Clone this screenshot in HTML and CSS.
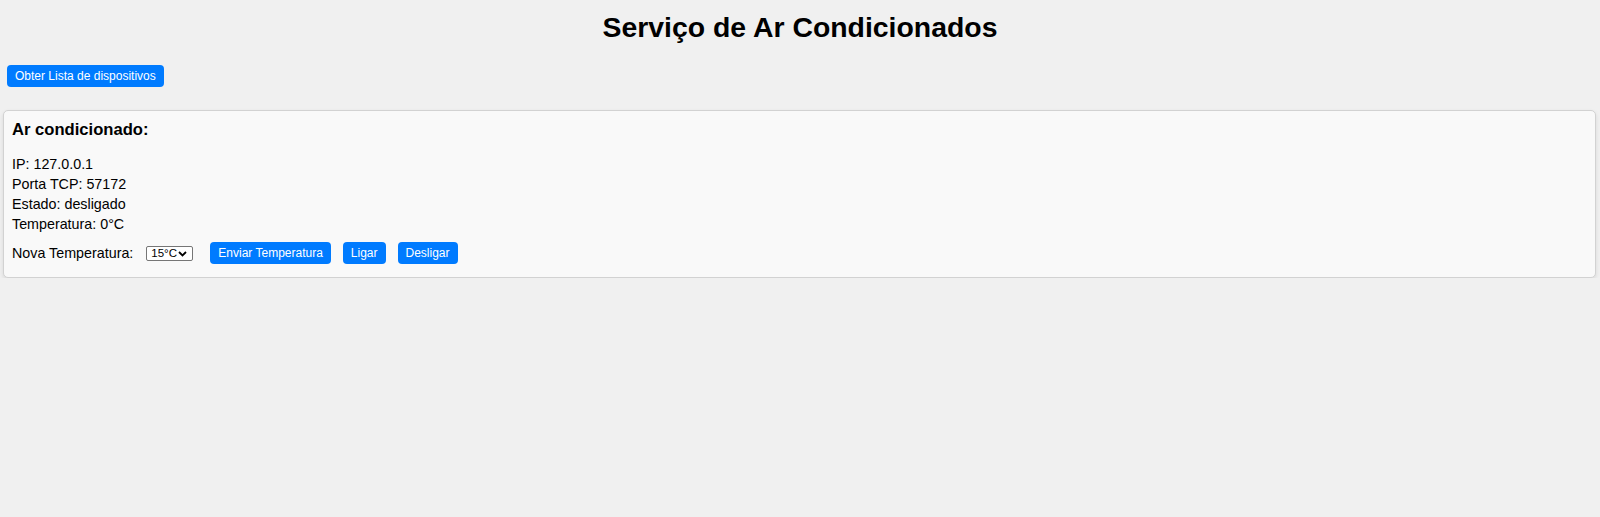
FILE: index.html
```html
<!DOCTYPE html>
<html lang="pt">
<head>
<meta charset="utf-8">
<title>Serviço de Ar Condicionados</title>
<link rel="stylesheet" href="styles.css">
</head>
<body>
<h1 class="title">Serviço de Ar Condicionados</h1>
<div class="toolbar">
  <button class="btn">Obter Lista de dispositivos</button>
</div>
<div class="card">
  <h3 class="card-title">Ar condicionado:</h3>
  <div class="info">IP: 127.0.0.1</div>
  <div class="info">Porta TCP: 57172</div>
  <div class="info">Estado: desligado</div>
  <div class="info">Temperatura: 0°C</div>
  <div class="controls">
    <label class="label">Nova Temperatura:</label>
    <span class="select-wrap">
      <select class="select">
        <option>15°C</option>
        <option>16°C</option>
        <option>17°C</option>
      </select>
      <svg class="chev" width="9" height="6" viewBox="0 0 9 6"><path d="M1 1 L4.5 4.5 L8 1" fill="none" stroke="#000" stroke-width="1.8"/></svg>
    </span>
    <button class="btn btn-gap">Enviar Temperatura</button>
    <button class="btn btn-gap">Ligar</button>
    <button class="btn">Desligar</button>
  </div>
</div>
</body>
</html>
```
FILE: styles.css
```css
html, body {
  margin: 0;
  padding: 0;
}
body {
  background: #f0f0f0;
  font-family: "Liberation Sans", Arial, sans-serif;
  font-size: 14.3px;
  color: #000;
}
.title {
  margin: 11px 0 22px;
  font-size: 28.4px;
  line-height: 32px;
  font-weight: bold;
  text-align: center;
}
.toolbar {
  padding-left: 7px;
  margin-bottom: 23px;
  display: flex;
}
.btn {
  font-family: "Liberation Sans", Arial, sans-serif;
  font-size: 12px;
  line-height: 14px;
  padding: 4px 8px;
  border: none;
  border-radius: 4px;
  background: #007bff;
  color: #fff;
  cursor: pointer;
}
.card {
  margin: 0 4px 0 3px;
  border: 1px solid #d2d2d2;
  border-radius: 5px;
  background: #f9f9f9;
  padding: 9px 9px 10px 8px;
  box-shadow: 0 2px 4px rgba(0, 0, 0, 0.1);
}
.card-title {
  margin: 0 0 15px;
  font-size: 16.6px;
  line-height: 19px;
  font-weight: bold;
}
.info {
  line-height: 20px;
}
.controls {
  display: flex;
  align-items: center;
  margin: 8px 0 3px;
  height: 22px;
}
.label {
  margin-right: 13px;
}
.select-wrap {
  position: relative;
  display: inline-flex;
  margin-right: 17px;
}
.select {
  appearance: none;
  -webkit-appearance: none;
  width: 47px;
  height: 15px;
  box-sizing: border-box;
  border: 1px solid #767676;
  border-radius: 2px;
  background: #fff;
  font-family: "Liberation Sans", Arial, sans-serif;
  font-size: 11.5px;
  line-height: 13px;
  padding: 0 0 0 4px;
  color: #000;
  margin: 0;
}
.chev {
  position: absolute;
  right: 6px;
  top: 5px;
  pointer-events: none;
}
.btn-gap {
  margin-right: 12px;
}
```
